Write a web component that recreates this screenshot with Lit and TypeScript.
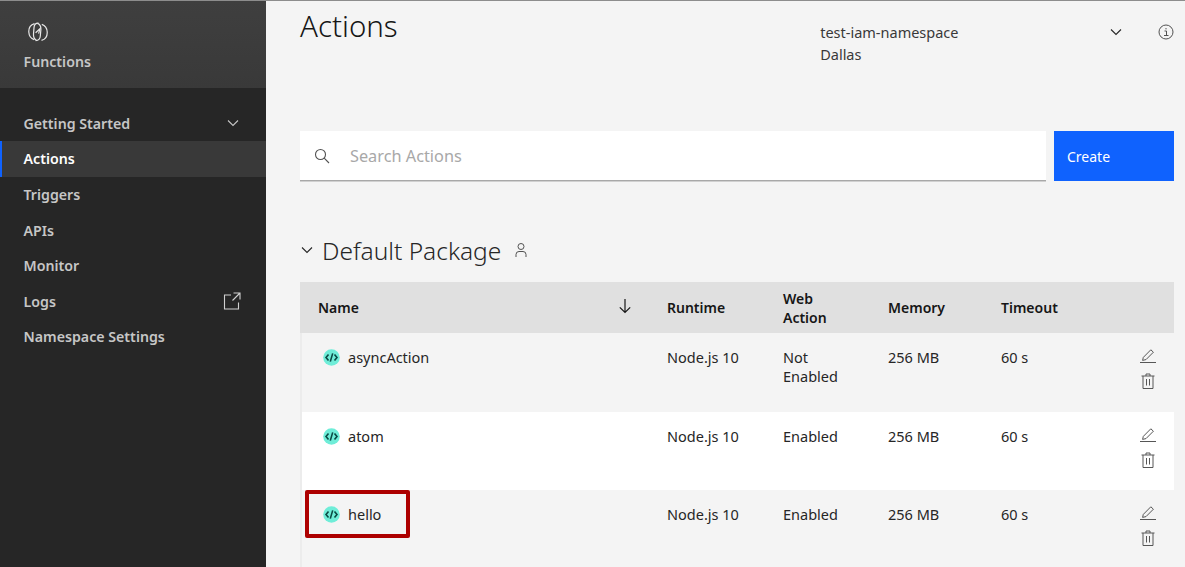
import { LitElement, html, css, svg } from 'lit';
import { customElement } from 'lit/decorators.js';

const NAV = ['Triggers', 'APIs', 'Monitor'];

const ROWS = [
  { name: 'asyncAction', runtime: 'Node.js 10', web: 'Not Enabled', memory: '256 MB', timeout: '60 s' },
  { name: 'atom', runtime: 'Node.js 10', web: 'Enabled', memory: '256 MB', timeout: '60 s' },
  { name: 'hello', runtime: 'Node.js 10', web: 'Enabled', memory: '256 MB', timeout: '60 s', marked: true },
];

const chevron = (size: number, color: string) => html`
  <svg width=${size} height=${size} viewBox="0 0 16 16" fill="none" stroke=${color} stroke-width="1.1">
    <path d="M3 5.5l5 5 5-5" />
  </svg>
`;

const codeIcon = html`
  <svg class="code" width="17" height="17" viewBox="0 0 17 17">
    <circle cx="8.5" cy="8.5" r="8.3" fill="#6fedd8" />
    ${svg`<path d="M5.5 5.4L3 8.5l2.5 3.1M11.5 5.4L14 8.5l-2.5 3.1M9.7 4.4L7.3 12.6" fill="none" stroke="#0b4a44" stroke-width="1.6" />`}
  </svg>
`;

const editIcon = html`
  <svg width="16" height="16" viewBox="0 0 16 16" fill="none" stroke="#565656" stroke-width="1">
    <path d="M0 14.5h16M2.6 12.4l.7-3L10.8 1.8l2.6 2.4-7.4 7.4z" />
  </svg>
`;

const trashIcon = html`
  <svg width="14" height="16" viewBox="0 0 14 16" fill="none" stroke="#565656" stroke-width="1">
    <path d="M0.5 3h13M5 3V1h4v2M2 3v12.5h10V3M5.5 6v6.5M8.5 6v6.5" />
  </svg>
`;

@customElement('app-root')
export class AppRoot extends LitElement {
  static styles = css`
    :host {
      display: block;
      height: 567px;
      overflow: hidden;
      font-family: 'Noto Sans', 'Open Sans', sans-serif;
      font-size: 14px;
      color: #161616;
    }

    .page {
      display: flex;
      height: 567px;
      background: #f4f4f4;
      border-top: 1px solid #8d8d8d;
      box-sizing: border-box;
    }

    .sidebar {
      width: 266px;
      flex: none;
      background: #262626;
      color: #c6c6c6;
      font-size: 14.2px;
      font-weight: 600;
    }

    .brand {
      height: 87px;
      box-sizing: border-box;
      padding: 21px 0 0 23.5px;
      background: linear-gradient(#3f3f3f, #393939);
    }

    .brand svg {
      display: block;
      margin-left: 4.5px;
    }

    .brand div {
      margin-top: 10px;
      line-height: 20px;
    }

    .nav {
      padding-top: 17.5px;
    }

    .nav-item {
      display: flex;
      align-items: center;
      justify-content: space-between;
      height: 35.6px;
      padding: 0 25px 0 23.5px;
      box-sizing: border-box;
    }

    .nav-item.active {
      background: #393939;
      border-left: 2px solid #0f62fe;
      padding-left: 21.5px;
      color: #fff;
    }

    .main {
      flex: 1;
      min-width: 0;
      padding: 0 11px 0 34px;
    }

    .top {
      display: flex;
      height: 130px;
    }

    h1 {
      width: 521px;
      margin: 7px 0 0;
      font-size: 29.5px;
      font-weight: 300;
      line-height: 36px;
    }

    .namespace {
      width: 295px;
      padding: 20px 0 0 4px;
      box-sizing: border-box;
      color: #393939;
      font-size: 14.5px;
      line-height: 22px;
    }

    .selector {
      padding: 23px 0 0;
      width: 50px;
    }

    .info {
      padding-top: 23px;
    }

    .search-row {
      display: flex;
      gap: 8px;
      height: 50px;
    }

    .search {
      flex: 1;
      display: flex;
      align-items: center;
      gap: 20px;
      padding-left: 14px;
      background: #fff;
      border-bottom: 1px solid #a8a8a8;
      box-shadow: 0 1px 0 #d0d0d0;
      color: #a8a8a8;
      font-size: 16.3px;
    }

    .create {
      width: 120px;
      box-sizing: border-box;
      padding: 0 0 0 13px;
      border: 0;
      background: #0f62fe;
      color: #fff;
      font: inherit;
      text-align: left;
    }

    .package {
      display: flex;
      align-items: center;
      height: 40px;
      margin: 49px 0 12px -1px;
    }

    .package h2 {
      margin: 0 12px 0 7px;
      font-size: 24.5px;
      font-weight: 300;
      color: #262626;
    }

    .table {
      border-left: 2px solid #ececec;
    }

    .row {
      display: grid;
      grid-template-columns: 349px 116px 105px 113px 1fr 34px;
      height: 78.6px;
      padding: 15px 0 0 16px;
      box-sizing: border-box;
      font-size: 14.5px;
      line-height: 19px;
      color: #262626;
      position: relative;
    }

    .row:nth-child(odd) {
      background: #fff;
    }

    .row.head {
      height: 51px;
      margin-left: -2px;
      padding: 0 0 0 18px;
      align-items: center;
      background: #e0e0e0;
      font-size: 14px;
      font-weight: 600;
      color: #161616;
    }

    .name-head {
      display: flex;
      justify-content: space-between;
      padding-right: 34px;
    }

    .name {
      display: flex;
      align-items: flex-start;
      gap: 8px;
      padding-left: 5px;
    }

    .code {
      flex: none;
      margin-top: 1px;
    }

    .actions {
      display: flex;
      flex-direction: column;
      align-items: center;
      gap: 9px;
      width: 16px;
    }

    .actions svg {
      display: block;
    }

    .mark {
      position: absolute;
      left: 3px;
      top: 0;
      width: 105px;
      height: 48px;
      box-sizing: border-box;
      border: 4px solid #ad0000;
      border-radius: 2px;
    }
  `;

  render(): unknown {
    return html`
      <div class="page">
        <aside class="sidebar">
          <div class="brand">
            <svg width="20" height="20" viewBox="0 0 20 20" fill="none" stroke="#e8e8e8" stroke-width="1.2">
              <path d="M6.5 1.6C2.8 2.6.6 6 .8 10c.2 3.6 2.4 6.6 5.4 7.6" />
              <path d="M13.5 18.4c3.7-1 5.9-4.4 5.7-8.4-.2-3.6-2.4-6.6-5.4-7.6" />
              <path d="M10.5 1.2C7.4 1 6.2 3 6 5.6L5.5 12c-.2 2.6.6 5 3 6.4" />
              <path d="M9.6 1.4c2.8 1.2 3.4 3.4 3.3 6l-.6 6.6c-.2 2.8-1.6 4.6-4.6 4.6" />
              <path d="M7.6 10.8L12 6.6l-1.4 5" />
            </svg>
            <div>Functions</div>
          </div>
          <nav class="nav">
            <div class="nav-item">Getting Started ${chevron(16, '#c6c6c6')}</div>
            <div class="nav-item active">Actions</div>
            ${NAV.map((item) => html`<div class="nav-item">${item}</div>`)}
            <div class="nav-item">
              Logs
              <svg width="18" height="18" viewBox="0 0 18 18" fill="none" stroke="#d0d0d0" stroke-width="1.1">
                <path d="M8 3H1.5v14h14v-6.5M10.5 1H17v6.5M17 1L9.5 8.5" />
              </svg>
            </div>
            <div class="nav-item">Namespace Settings</div>
          </nav>
        </aside>

        <main class="main">
          <div class="top">
            <h1>Actions</h1>
            <div class="namespace">test-iam-namespace<br />Dallas</div>
            <div class="selector">${chevron(16, '#262626')}</div>
            <div class="info">
              <svg width="16" height="16" viewBox="0 0 16 16" fill="none" stroke="#525252" stroke-width="1">
                <circle cx="8" cy="8" r="7" />
                <path d="M6.5 7h2v4.5M6 11.5h4.5M8 4v1.4" />
              </svg>
            </div>
          </div>

          <div class="search-row">
            <div class="search">
              <svg width="16" height="16" viewBox="0 0 16 16" fill="none" stroke="#525252" stroke-width="1.1">
                <circle cx="6.5" cy="6.5" r="5" />
                <path d="M10.2 10.2L15 15" />
              </svg>
              Search Actions
            </div>
            <button class="create">Create</button>
          </div>

          <div class="package">
            ${chevron(16, '#262626')}
            <h2>Default Package</h2>
            <svg width="16" height="16" viewBox="0 0 16 16" fill="none" stroke="#525252" stroke-width="1">
              <circle cx="8" cy="4.5" r="3" />
              <path d="M3 15v-2.5A3 3 0 0 1 6 9.5h4a3 3 0 0 1 3 3V15" />
            </svg>
          </div>

          <div class="table">
            <div class="row head">
              <div class="name-head">
                Name
                <svg width="16" height="16" viewBox="0 0 16 16" fill="none" stroke="#161616" stroke-width="1.2">
                  <path d="M8 1v13.5M2.8 9.3L8 14.5l5.2-5.2" />
                </svg>
              </div>
              <div>Runtime</div>
              <div>Web<br />Action</div>
              <div>Memory</div>
              <div>Timeout</div>
              <div></div>
            </div>
            ${ROWS.map(
              (row) => html`
                <div class="row">
                  <div class="name">${codeIcon} ${row.name}</div>
                  <div>${row.runtime}</div>
                  <div>${row.web === 'Not Enabled' ? html`Not<br />Enabled` : row.web}</div>
                  <div>${row.memory}</div>
                  <div>${row.timeout}</div>
                  <div class="actions">${editIcon} ${trashIcon}</div>
                  ${row.marked ? html`<div class="mark"></div>` : ''}
                </div>
              `
            )}
          </div>
        </main>
      </div>
    `;
  }
}

declare global {
  interface HTMLElementTagNameMap {
    'app-root': AppRoot;
  }
}
